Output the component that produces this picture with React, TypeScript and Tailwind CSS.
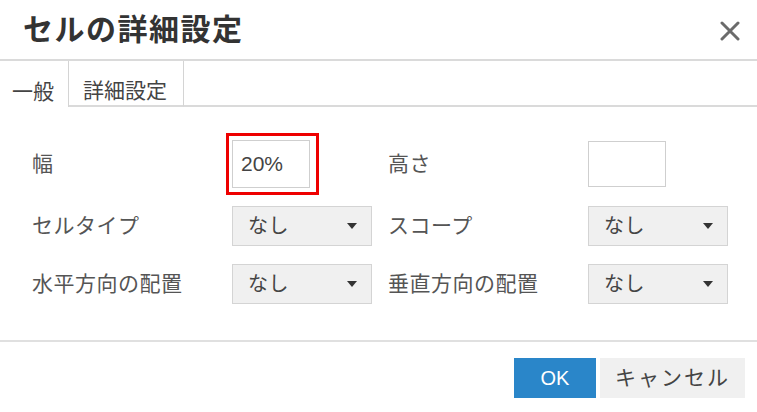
import React from "react";

const FONT = { fontFamily: '"Liberation Sans", "Noto Sans CJK JP", sans-serif' };

function Select({ value }: { value: string }) {
  return (
    <div className="flex h-[40px] w-[140px] items-center justify-between border border-[#d4d4d4] bg-[#f0f0f0] pl-[15px] pr-[14px] text-[20px] text-[#444]">
      <span>{value}</span>
      <svg width="10" height="6" viewBox="0 0 10 6">
        <path d="M0 0 L10 0 L5 6 Z" fill="#333" />
      </svg>
    </div>
  );
}

export default function App() {
  return (
    <div className="flex h-[412px] w-[757px] flex-col bg-white" style={FONT}>
      {/* Header */}
      <div className="flex h-[59px] items-center justify-between pl-[23px] pr-[17px]">
        <h1 className="text-[30px] font-semibold leading-none tracking-[1.5px] text-[#333]">セルの詳細設定</h1>
        <svg width="20" height="20" viewBox="0 0 20 20" className="mt-[2px]">
          <path d="M2 2 L18 18 M18 2 L2 18" stroke="#6b6b6b" strokeWidth="3" strokeLinecap="round" />
        </svg>
      </div>

      {/* Tabs */}
      <div className="flex h-[48px] border-t-2 border-[#dadada]">
        <div className="flex w-[69px] items-center border-r border-[#d4d4d4] pl-[12px] pt-[14px] text-[21px] leading-none text-[#444]">
          一般
        </div>
        <div className="flex w-[115px] items-center border-b-2 border-r border-[#d4d4d4] border-b-[#dadada] pl-[14px] pt-[14px] text-[21px] leading-none text-[#444]">
          詳細設定
        </div>
        <div className="flex-1 border-b-2 border-[#dadada]" />
      </div>

      {/* Form */}
      <div className="grid grid-cols-[200px_156px_200px_140px] items-center gap-y-[18px] pl-[32px] pt-[33px] text-[21px] tracking-[0.5px] text-[#555]">
        <div>幅</div>
        <div>
          <div className="relative w-[78px]">
            <div className="flex h-[48px] w-[78px] items-center border border-[#cfcfcf] bg-white pl-[8px] text-[21px] tracking-normal text-[#444]">
              20%
            </div>
            <span className="absolute -bottom-[7px] -left-[6px] -right-[9px] -top-[7px] border-[3px] border-[#ee0000]" />
          </div>
        </div>
        <div>高さ</div>
        <div>
          <div className="h-[46px] w-[78px] border border-[#cfcfcf] bg-white" />
        </div>

        <div>セルタイプ</div>
        <div>
          <Select value="なし" />
        </div>
        <div>スコープ</div>
        <div>
          <Select value="なし" />
        </div>

        <div>水平方向の配置</div>
        <div>
          <Select value="なし" />
        </div>
        <div>垂直方向の配置</div>
        <div>
          <Select value="なし" />
        </div>
      </div>

      {/* Footer */}
      <div className="mt-[36px] border-t-2 border-[#e0e0e0]" />
      <div className="flex justify-end gap-[4px] pr-[12px] pt-[16px]">
        <button className="flex h-[40px] w-[82px] items-center justify-center bg-[#2a86c9] text-[20px] text-white">
          OK
        </button>
        <button className="flex h-[40px] w-[145px] items-center justify-center bg-[#f0f0f0] text-[21px] tracking-[2px] text-[#444]">
          キャンセル
        </button>
      </div>
    </div>
  );
}
